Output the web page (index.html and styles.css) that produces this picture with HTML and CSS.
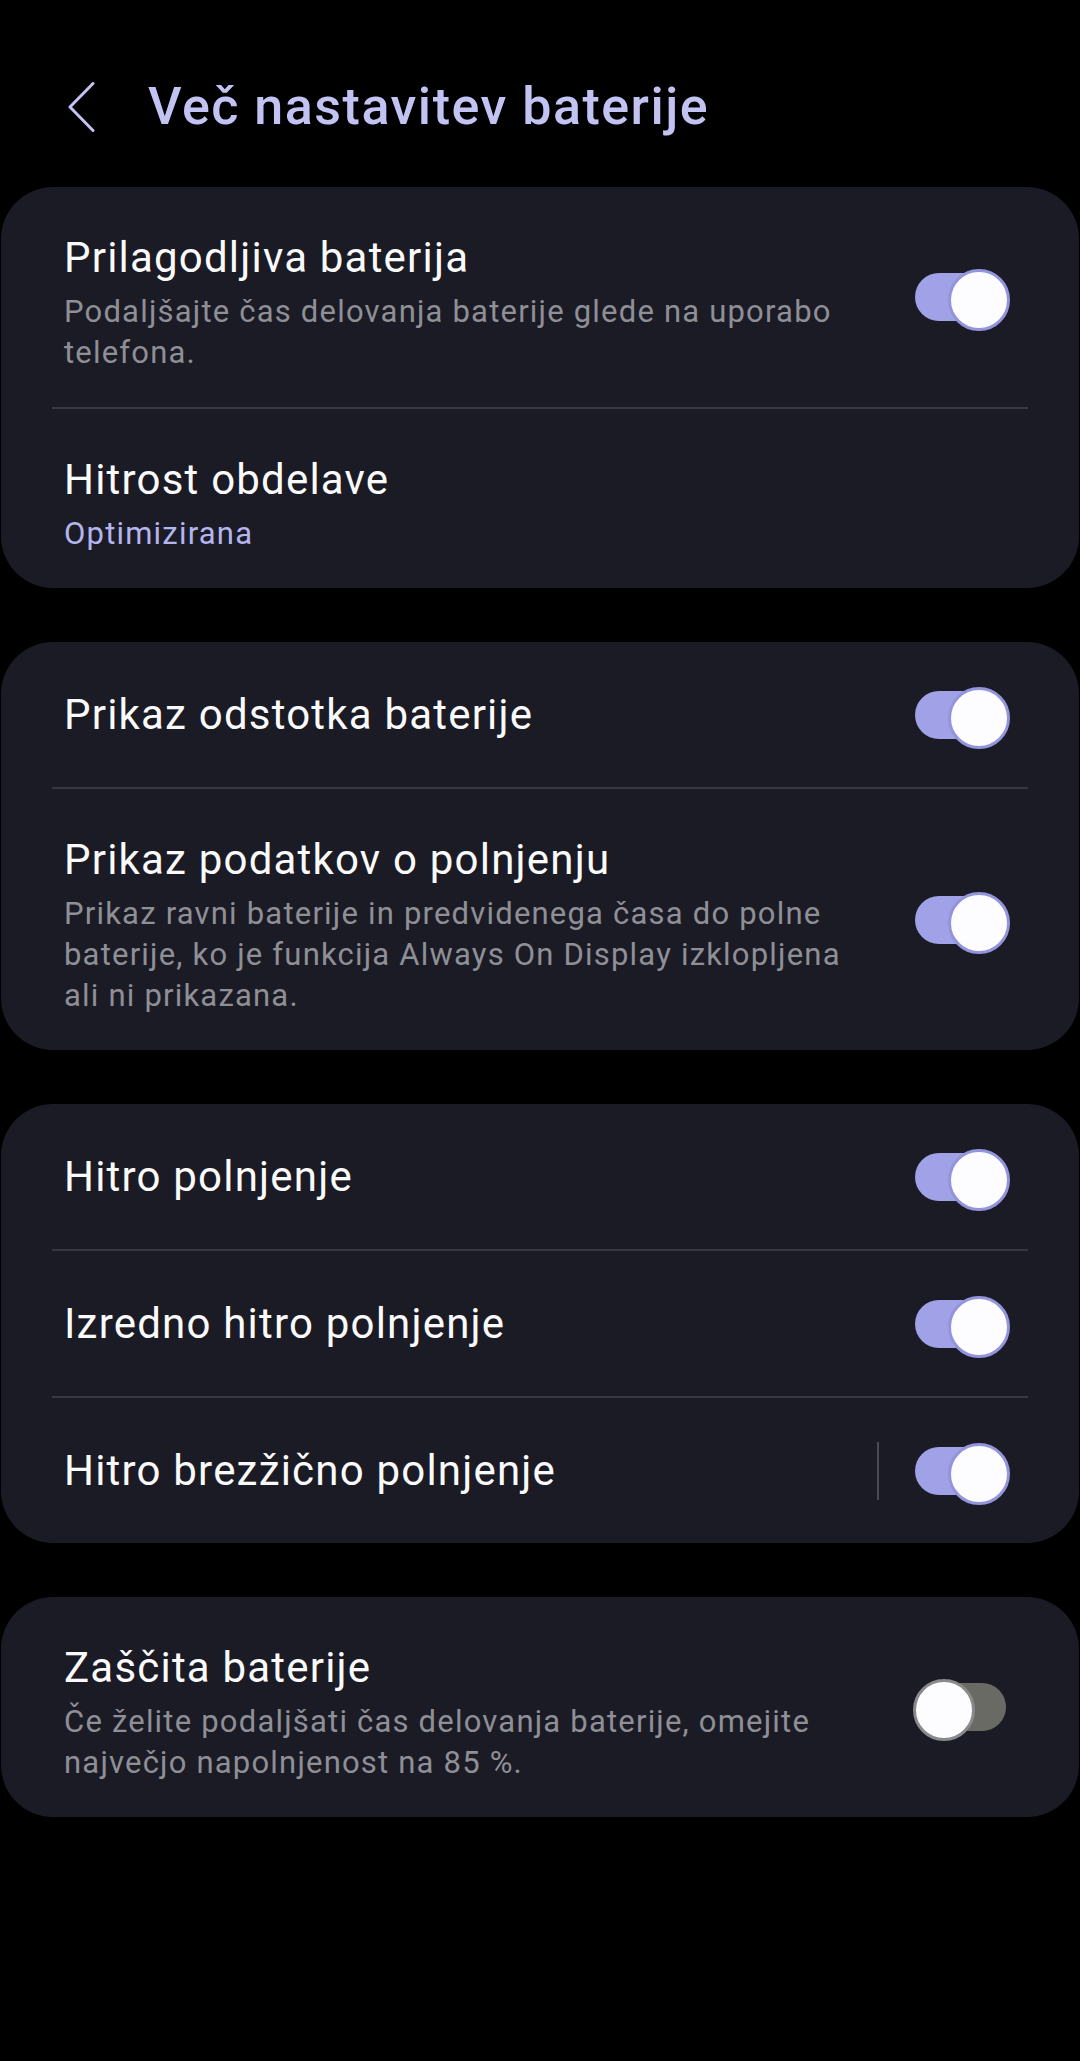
FILE: index.html
```html
<!doctype html>
<html lang="sl">
<head>
    <meta charset="utf-8">
    <title>Več nastavitev baterije</title>
    <link rel="stylesheet" href="styles.css">
</head>
<body>
<header class="topbar">
    <svg class="back" width="30" height="50" viewBox="0 0 30 50">
        <polyline points="27,1.5 4,25 27,48.5" fill="none" stroke="#c3c3f3" stroke-width="3" stroke-linecap="round" stroke-linejoin="round"/>
    </svg>
    <h1>Več nastavitev baterije</h1>
</header>

<div class="list">
    <div class="card">
        <div class="row">
            <div class="text">
                <div class="title">Prilagodljiva baterija</div>
                <div class="summary">Podaljšajte čas delovanja baterije glede na uporabo telefona.</div>
            </div>
            <span class="switch on"></span>
        </div>
        <div class="sep"></div>
        <div class="row">
            <div class="text">
                <div class="title">Hitrost obdelave</div>
                <div class="summary accent">Optimizirana</div>
            </div>
        </div>
    </div>

    <div class="card">
        <div class="row single">
            <div class="text">
                <div class="title">Prikaz odstotka baterije</div>
            </div>
            <span class="switch on"></span>
        </div>
        <div class="sep"></div>
        <div class="row">
            <div class="text">
                <div class="title">Prikaz podatkov o polnjenju</div>
                <div class="summary">Prikaz ravni baterije in predvidenega časa do polne baterije, ko je funkcija Always On Display izklopljena ali ni prikazana.</div>
            </div>
            <span class="switch on"></span>
        </div>
    </div>

    <div class="card">
        <div class="row single">
            <div class="text">
                <div class="title">Hitro polnjenje</div>
            </div>
            <span class="switch on"></span>
        </div>
        <div class="sep"></div>
        <div class="row single">
            <div class="text">
                <div class="title">Izredno hitro polnjenje</div>
            </div>
            <span class="switch on"></span>
        </div>
        <div class="sep"></div>
        <div class="row single">
            <div class="text">
                <div class="title">Hitro brezžično polnjenje</div>
            </div>
            <span class="vbar"></span>
            <span class="switch on"></span>
        </div>
    </div>

    <div class="card">
        <div class="row">
            <div class="text">
                <div class="title">Zaščita baterije</div>
                <div class="summary">Če želite podaljšati čas delovanja baterije, omejite največjo napolnjenost na 85 %.</div>
            </div>
            <span class="switch"></span>
        </div>
    </div>
</div>
</body>
</html>
```

FILE: styles.css
```css
* {
    margin: 0;
    padding: 0;
    box-sizing: border-box;
}

body {
    background: #000;
    color: #fafafa;
    font-family: Roboto, "Noto Sans", "Liberation Sans", sans-serif;
    width: 1080px;
    height: 2061px;
}

.topbar {
    display: flex;
    align-items: center;
    height: 58px;
    margin: 78px 0 51px;
    padding-left: 66px;
}

.back {
    display: block;
}

.topbar h1 {
    margin-left: 52px;
    font-size: 52px;
    font-weight: 500;
    letter-spacing: 1.5px;
    line-height: 58px;
    color: #c3c3f3;
}

.list {
    display: flex;
    flex-direction: column;
    gap: 54px;
    padding: 0 1px;
}

.card {
    background: #1b1b26;
    border-radius: 52px;
}

.row {
    display: flex;
    align-items: center;
    padding: 0 69px 0 63px;
}

.row.single {
    min-height: 145px;
}

.text {
    flex: 1;
    padding: 46px 42px 34px 0;
}

.row.single .text {
    padding-top: 0;
    padding-bottom: 0;
}

.title {
    font-size: 42px;
    letter-spacing: 1.2px;
    line-height: 50px;
}

.summary {
    margin-top: 8px;
    font-size: 31px;
    letter-spacing: 1.2px;
    line-height: 41px;
    color: #8f8f96;
}

.summary.accent {
    color: #b4b4ee;
}

.sep {
    height: 2px;
    margin: 0 51px;
    background: #383841;
}

.vbar {
    width: 2px;
    height: 58px;
    margin-right: 34px;
    background: #4a4a52;
}

.switch {
    position: relative;
    flex: none;
    width: 97px;
    height: 56px;
}

.switch::before {
    content: "";
    position: absolute;
    left: 2px;
    right: 4px;
    top: 4px;
    bottom: 4px;
    border-radius: 24px;
    background: #6a6a65;
}

.switch::after {
    content: "";
    position: absolute;
    left: 0;
    top: 0;
    width: 56px;
    height: 56px;
    border-radius: 50%;
    background: #fdfdff;
    border: 3px solid #8a8a8c;
}

.switch.on::before {
    background: #a1a1e8;
}

.switch.on::after {
    left: auto;
    right: 0;
    border-color: #9494dc;
}
```
